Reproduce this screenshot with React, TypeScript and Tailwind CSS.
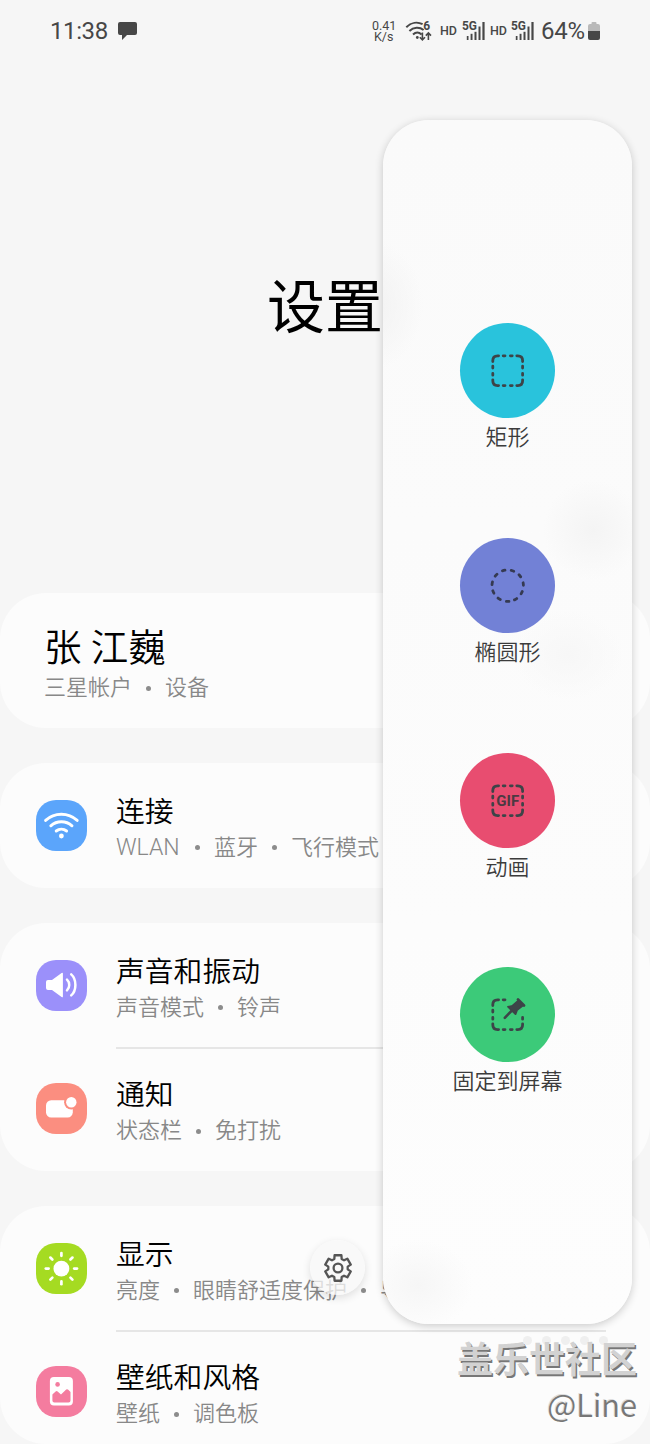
import type { ReactNode } from "react";

const Squircle = ({ className, children }: { className: string; children: ReactNode }) => (
  <div className={`h-[51px] w-[51px] shrink-0 rounded-[20px] ${className}`}>
    <svg viewBox="0 0 51 51" className="h-full w-full" fill="none">
      {children}
    </svg>
  </div>
);

const WifiIcon = () => (
  <Squircle className="bg-[#5ba5fb]">
    <g stroke="#fff" strokeWidth="2.9" strokeLinecap="round">
      <path d="M9.6 20.4C18.5 12.2 32.2 12.2 41.2 20.4" />
      <path d="M14.8 25.8C20.8 20.4 30 20.4 36 25.8" />
      <path d="M20.2 31C23.2 28.6 27.6 28.6 30.6 31" />
    </g>
    <circle cx="25.4" cy="36" r="2.4" fill="#fff" />
  </Squircle>
);

const SoundIcon = () => (
  <Squircle className="bg-[#9b90fa]">
    <path
      d="M12 20h4l9.6-7.1q1.3-.7 1.3.7v22.8q0 1.4-1.3.6L16 30h-4q-2 0-2-2v-6q0-2 2-2z"
      fill="#fff"
    />
    <path
      d="M31 19.6c3 2.8 3 8 0 10.8M35.2 14.4c5.6 5 5.6 16 0 21"
      stroke="#fff"
      strokeWidth="2.5"
      strokeLinecap="round"
    />
  </Squircle>
);

const NoticeIcon = () => (
  <Squircle className="bg-[#fb8e80]">
    <rect x="10" y="17.2" width="26.8" height="17.2" rx="5.2" fill="#fff" />
    <circle cx="35.3" cy="19.3" r="7.2" fill="#fb8e80" />
    <circle cx="35.3" cy="19.3" r="5.2" fill="#fff" />
  </Squircle>
);

const SunIcon = () => (
  <Squircle className="bg-[#a5db22]">
    <circle cx="25.4" cy="25.6" r="7.9" fill="#fff" />
    {[0, 45, 90, 135, 180, 225, 270, 315].map((deg) => (
      <path
        key={deg}
        d="M25.4 12.8V10"
        transform={`rotate(${deg} 25.4 25.6)`}
        stroke="#fff"
        strokeWidth="2.7"
        strokeLinecap="round"
      />
    ))}
  </Squircle>
);

const WallpaperIcon = () => (
  <Squircle className="bg-[#f47c9f]">
    <rect x="13.9" y="11" width="23" height="28.6" rx="4" fill="#fff" />
    <circle cx="21.6" cy="18.4" r="2.3" fill="#f47c9f" />
    <path
      d="M16.4 28.6l3.2-3.2q1-.9 2 0l3.4 3.1 5.2-4.9q1.1-.8 2.1.2l2.2 2.2v8.4q0 2-2 2H18.4q-2 0-2-2z"
      fill="#f47c9f"
    />
  </Squircle>
);

const Subtitle = ({ parts }: { parts: string[] }) => (
  <div className="mt-px flex text-[22px] leading-[30px] font-[350] whitespace-nowrap text-[#888]">
    {parts.map((part, i) => (
      <span key={part} className="flex">
        {i > 0 && (
          <span className="flex w-[33px] items-center justify-center">
            <span className="h-[5px] w-[5px] rounded-full bg-[#8c8c8c]" />
          </span>
        )}
        {part === "WLAN" ? <span className="w-[65px] text-[23px]">{part}</span> : part}
      </span>
    ))}
  </div>
);

const groups = [
  {
    box: "mt-[35px] h-[125px]",
    rows: [{ icon: <WifiIcon />, title: "连接", parts: ["WLAN", "蓝牙", "飞行模式"] }],
  },
  {
    box: "mt-[35px] h-[248px]",
    rows: [
      { icon: <SoundIcon />, title: "声音和振动", parts: ["声音模式", "铃声"] },
      { icon: <NoticeIcon />, title: "通知", parts: ["状态栏", "免打扰"] },
    ],
  },
  {
    box: "mt-[35px] h-[238px]",
    rows: [
      { icon: <SunIcon />, title: "显示", parts: ["亮度", "眼睛舒适度保护", "导航条"] },
      { icon: <WallpaperIcon />, title: "壁纸和风格", parts: ["壁纸", "调色板"] },
    ],
  },
];

const Signal = () => (
  <svg viewBox="0 0 26 24" className="h-6 w-[26px]" fill="#474747">
    <text x="0" y="11.4" fontSize="12.5" fontWeight="700" textLength="15" lengthAdjust="spacingAndGlyphs" className="font-['Roboto']">
      5G
    </text>
    <rect x="4.8" y="17" width="1.7" height="4" />
    <rect x="8.6" y="14.8" width="1.9" height="6.2" />
    <rect x="12.5" y="12.8" width="2" height="8.2" />
    <rect x="16.5" y="7.5" width="2" height="13.5" />
    <rect x="20.4" y="3" width="2.2" height="18" />
  </svg>
);

const StatusBar = () => (
  <div className="flex h-[62px] items-center pl-[50px] text-[#474747]">
    <span className="w-[67px] text-[24px] tracking-[-0.4px]">11:38</span>
    <svg viewBox="0 0 22 22" className="h-[22px] w-[22px]" fill="#474747">
      <path d="M3 2h15q2 0 2 2v9q0 2-2 2h-8l-5 5v-5H3q-2 0-2-2V4q0-2 2-2z" />
    </svg>
    <div className="ml-[233px] flex w-[33px] flex-col text-[12.5px] leading-[11px]">
      <span>0.41</span>
      <span className="pl-[2px]">K/s</span>
    </div>
    <svg viewBox="0 0 28 24" className="h-6 w-7" fill="none" stroke="#474747" strokeWidth="2">
      <path d="M1.3 8.2C6.2 3.3 12.6 2.7 17.6 5.2M4.4 12C8.6 7.9 14.6 7.8 18.6 11M8 15.5c2.6-2.5 6-2.5 8.6 0" />
      <circle cx="12.3" cy="18.5" r="1.4" fill="#474747" stroke="none" />
      <path d="M17.4 13.6v7M14.8 18.2l2.6 2.6 2.6-2.6M23.4 21v-7M20.8 16.6l2.6-2.6 2.6 2.6" strokeWidth="1.6" />
      <text x="18.3" y="11.3" fontSize="12" fontWeight="700" fill="#474747" stroke="none" className="font-['Roboto']">
        6
      </text>
    </svg>
    <span className="ml-[7px] w-[22px] text-[12.5px] font-medium">HD</span>
    <Signal />
    <span className="ml-[2px] w-[21px] text-[12.5px] font-medium">HD</span>
    <Signal />
    <span className="ml-[4px] w-[47px] text-[24px] tracking-[-0.3px]">64%</span>
    <svg viewBox="0 0 12 18" className="h-[18px] w-3">
      <path d="M3.5 2V1q0-1 1-1h3q1 0 1 1v1H10q2 0 2 2v5H0V4q0-2 2-2z" fill="#b9b9b9" />
      <path d="M0 9h12v7q0 2-2 2H2q-2 0-2-2z" fill="#474747" />
    </svg>
  </div>
);

// Dashed selection frame shared by the capture tools
const corners = {
  tl: "M32.8 38.6v-1q0-4.8 4.8-4.8h1",
  tr: "M56.8 32.8h1q4.8 0 4.8 4.8v1",
  br: "M62.6 56.8v1q0 4.8-4.8 4.8h-1",
  bl: "M38.6 62.6h-1q-4.8 0-4.8-4.8v-1",
};

const Frame = ({ d }: { d: string }) => (
  <path d={d} fill="none" stroke="#3d4448" strokeWidth="2.8" strokeLinecap="round" />
);

const fullFrame =
  corners.tl +
  corners.tr +
  corners.br +
  corners.bl +
  "M43.2 32.8h1.8M50.4 32.8h1.8M43.2 62.6h1.8M50.4 62.6h1.8M32.8 43.2v1.8M32.8 50.4v1.8M62.6 43.2v1.8M62.6 50.4v1.8";

const tools = [
  {
    label: "矩形",
    color: "bg-[#29c3dc]",
    icon: <Frame d={fullFrame} />,
  },
  {
    label: "椭圆形",
    color: "bg-[#7281d6]",
    icon: (
      <circle
        cx="47.7"
        cy="47.7"
        r="15.7"
        fill="none"
        stroke="#353a52"
        strokeWidth="2.8"
        strokeLinecap="round"
        strokeDasharray="2.6 6.368"
        transform="rotate(85.5 47.7 47.7)"
      />
    ),
  },
  {
    label: "动画",
    color: "bg-[#e84d70]",
    icon: (
      <>
        <Frame d={fullFrame} />
        <text
          x="47.7"
          y="53"
          fontSize="15"
          fontWeight="700"
          textAnchor="middle"
          textLength="23"
          lengthAdjust="spacingAndGlyphs"
          fill="#4d3a42"
          className="font-['Roboto']"
        >
          GIF
        </text>
      </>
    ),
  },
  {
    label: "固定到屏幕",
    color: "bg-[#3cca79]",
    icon: (
      <>
        <Frame
          d={
            corners.tl +
            corners.br +
            corners.bl +
            "M43.2 32.8h1.8M43.2 62.6h1.8M50.4 62.6h1.8M32.8 43.2v1.8M32.8 50.4v1.8M62.6 50.4v1.8"
          }
        />
        <g fill="#3d4448" stroke="#3d4448" strokeLinecap="round" strokeLinejoin="round">
          <path d="M58 32.4l6 6" strokeWidth="2.8" />
          <path d="M57.6 34l5 5-5.4 4.2-1.6 4.2-7.8-7.6 4.6-1.2z" strokeWidth="1.4" />
          <path d="M51.4 44l-6.6 6.8" strokeWidth="2.6" />
        </g>
      </>
    ),
  },
];

const CapturePanel = () => (
  <div className="absolute top-[120px] left-[383px] h-[1204px] w-[249px] overflow-hidden rounded-[46px] bg-gradient-to-b from-[#fafafa] to-[#fdfdfd]">
    {/* what shows through from the page below */}
    <div className="absolute top-[120px] -left-[60px] h-[130px] w-[100px] bg-[radial-gradient(closest-side,#f2f2f2,transparent)]" />
    <div className="absolute top-[360px] left-[160px] h-[100px] w-[100px] bg-[radial-gradient(closest-side,#f4f4f4,transparent)]" />
    <div className="absolute top-[490px] left-[130px] h-[90px] w-[110px] bg-[radial-gradient(closest-side,#f7f7f7,transparent)]" />
    <div className="absolute top-[1120px] -left-[20px] h-[90px] w-[110px] bg-[radial-gradient(closest-side,#f6f6f6,transparent)]" />
    <div className="relative flex flex-col items-center pt-[203px]">
      {tools.map((tool) => (
        <div key={tool.label} className="flex h-[214.8px] flex-col items-center">
          <div className={`h-[95px] w-[95px] rounded-full ${tool.color}`}>
            <svg viewBox="0 0 95 95" className="h-full w-full">
              {tool.icon}
            </svg>
          </div>
          <span className="mt-1 text-[22px] leading-[32px] font-[350] text-[#3c3c3c]">{tool.label}</span>
        </div>
      ))}
    </div>
  </div>
);

const gearPath = () => {
  const points: string[] = [];
  for (let i = 0; i < 6; i++) {
    const tooth = i * 60 - 90;
    for (const [offset, r] of [[-22, 9.8], [-15, 13.2], [15, 13.2], [22, 9.8]]) {
      const a = ((tooth + offset) * Math.PI) / 180;
      points.push(`${(15 + r * Math.cos(a)).toFixed(2)} ${(15 + r * Math.sin(a)).toFixed(2)}`);
    }
  }
  return `M${points.join("L")}Z`;
};

const SettingsButton = () => (
  <div className="absolute top-[1240px] left-[310px] flex h-[55px] w-[55px] items-center justify-center rounded-full bg-[#f8f8f8]/75 shadow-[0_3px_8px_rgba(0,0,0,0.12)]">
    <svg viewBox="0 0 30 30" className="h-[30px] w-[30px]" fill="none" stroke="#555" strokeWidth="2.3" strokeLinejoin="round">
      <path d={gearPath()} />
      <circle cx="15" cy="15" r="4.4" />
    </svg>
  </div>
);

const Watermark = () => (
  <div className="absolute top-[1336px] right-[13px] flex flex-col items-end whitespace-nowrap">
    <div className="absolute top-0 left-[66px] flex gap-[10px]">
      {[0, 1, 2, 3, 4].map((i) => (
        <span key={i} className="h-[9px] w-[9px] rounded-full bg-[#efefef]" />
      ))}
    </div>
    <span className="relative text-[36px] leading-[50px] font-bold text-[#d2d2d2] [text-shadow:1.5px_1.5px_0_#777]">
      盖乐世社区
    </span>
    <span className="-mt-[4px] font-['Noto_Sans_CJK_SC'] text-[31px] leading-[44px] font-[350] text-[#777] [text-shadow:-1px_-1px_0_#ddd]">
      @Line
    </span>
  </div>
);

const App = () => {
  return (
    <div className="relative h-[1444px] w-[650px] overflow-hidden bg-[#f6f6f6] font-['Roboto','Noto_Sans_CJK_SC',sans-serif]">
      <StatusBar />
      <h1 className="mt-[206px] text-center text-[58px] leading-[80px] text-black">设置</h1>

      <div className="mt-[245px] h-[135px] rounded-[46px] bg-[#fcfcfc] pt-[31px] pl-[44px]">
        <div className="text-[37.5px] leading-[48px] font-[350] text-black">张 江巍</div>
        <Subtitle parts={["三星帐户", "设备"]} />
      </div>

      {groups.map((group) => (
        <div key={group.rows[0].title} className={`rounded-[46px] bg-[#fcfcfc] ${group.box}`}>
          {group.rows.map((row, i) => (
            <div key={row.title} className="flex h-[123.5px] pl-9">
              <div className="pt-[36.5px]">{row.icon}</div>
              <div className={`mr-11 ml-[29px] flex-1 ${i > 0 ? "border-t-2 border-[#e6e6e6]" : "pt-[2px]"}`}>
                <div className="mt-[26.5px] text-[28.8px] leading-[40px] font-[350] text-black">{row.title}</div>
                <Subtitle parts={row.parts} />
              </div>
            </div>
          ))}
        </div>
      ))}

      <div className="absolute top-[120px] left-[383px] h-[1204px] w-[249px] rounded-[46px] shadow-[0_2px_9px_rgba(0,0,0,0.2)]" />
      <CapturePanel />
      <SettingsButton />
      <Watermark />
    </div>
  );
};

export default App;
